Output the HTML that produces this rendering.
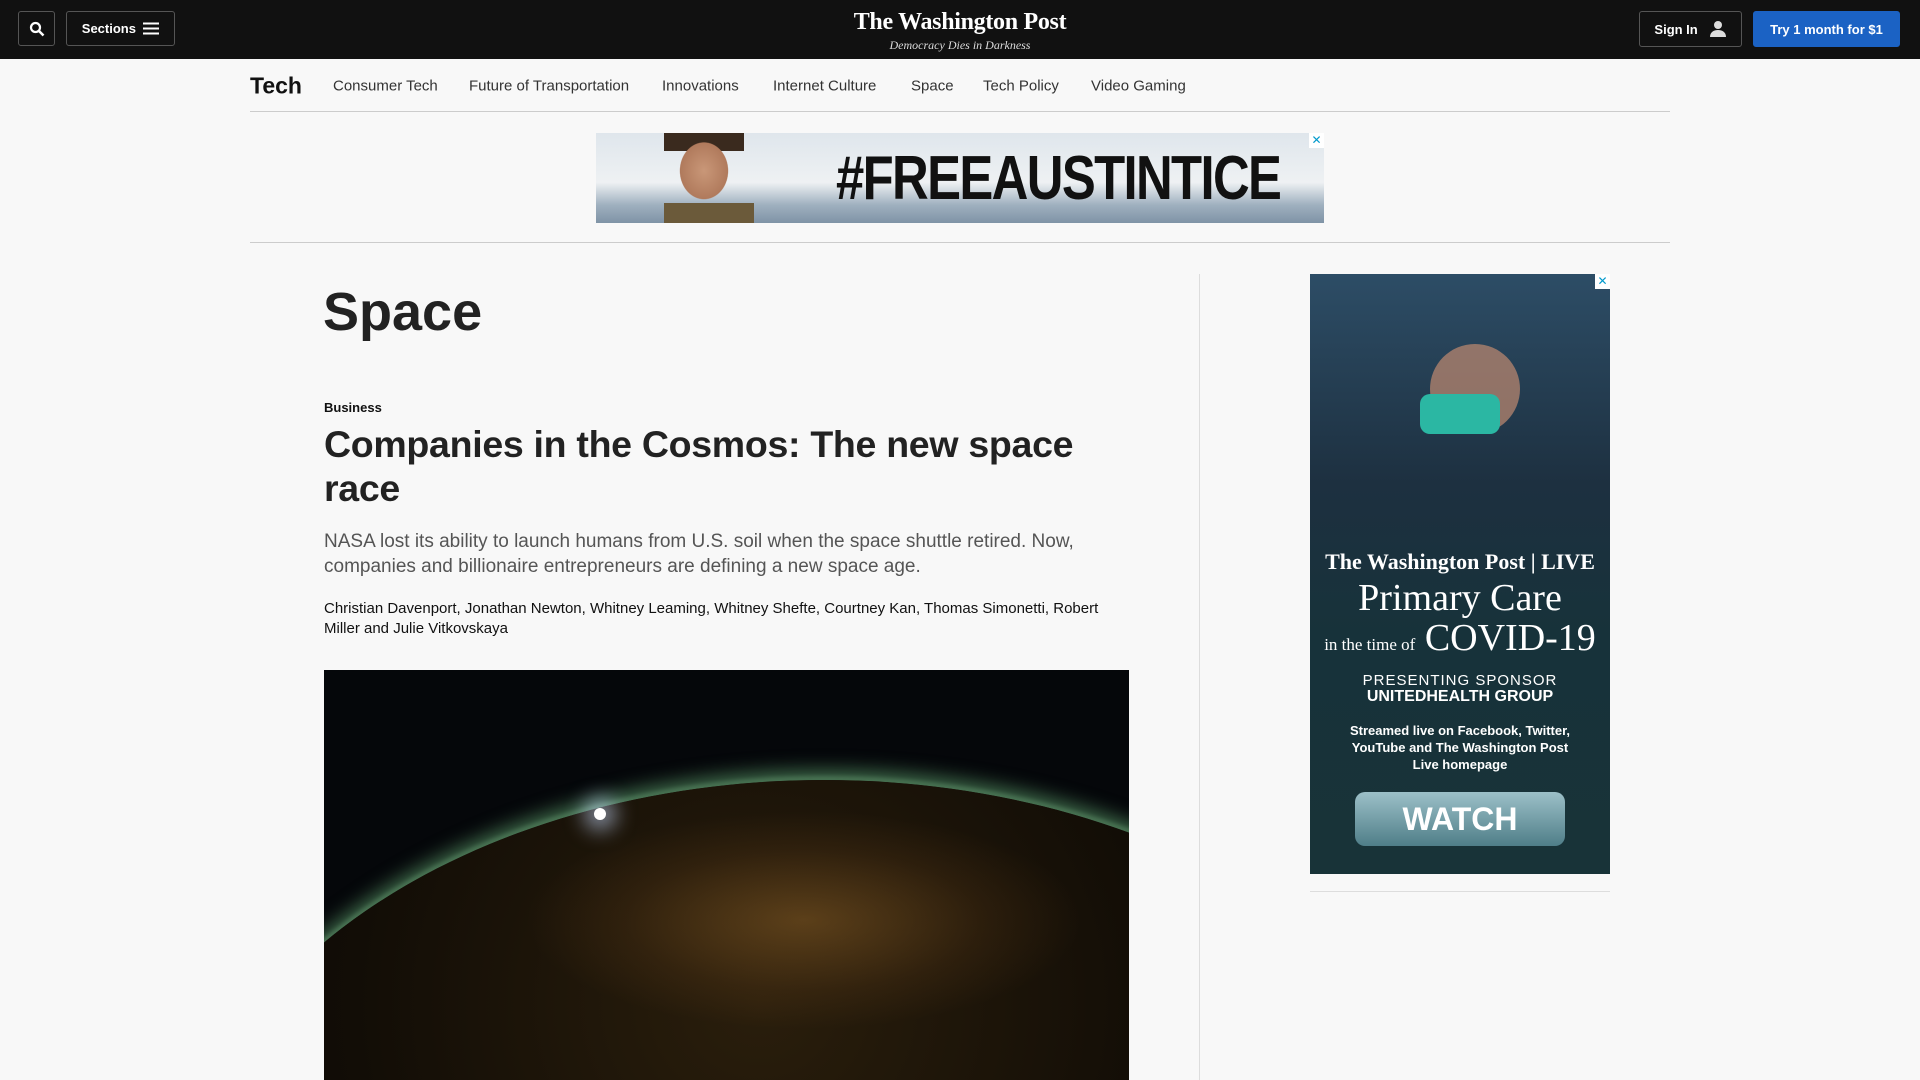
<!DOCTYPE html>
<html><head><meta charset="utf-8"><style>
*{margin:0;padding:0;box-sizing:border-box}
html,body{overflow:hidden}
body{width:1920px;height:1080px;background:#f8f8f8;font-family:"Liberation Sans",sans-serif;color:#111;position:relative}
.top{position:absolute;left:0;top:0;width:1920px;height:59px;background:#111}
.btn{position:absolute;border:1px solid #555;border-radius:3px;color:#fff;font-weight:bold;font-size:13px;display:flex;align-items:center;justify-content:center}
.logo{position:absolute;left:0;width:1920px;text-align:center;color:#fff;font-family:"Liberation Serif",serif}
.nav{position:absolute;top:86px;font-size:15px;color:#333;transform:translateY(-50%)}
.hr{position:absolute;height:1px;background:#ccc}
</style></head><body>
<div class="top">
 <div class="btn" style="left:18px;top:11px;width:37px;height:35px"><svg width="16" height="16" viewBox="0 0 16 16"><circle cx="6.5" cy="6.5" r="4.5" stroke="#fff" stroke-width="2.2" fill="none"/><path d="M10 10l4.5 4.5" stroke="#fff" stroke-width="2.5"/></svg></div>
 <div class="btn" style="left:66px;top:11px;width:109px;height:35px">Sections&nbsp;&nbsp;<svg width="16" height="13"><path d="M0 1.5h16M0 6.5h16M0 11.5h16" stroke="#fff" stroke-width="2"/></svg></div>
 <div class="logo" style="top:9px;font-size:24px;font-weight:bold;letter-spacing:-0.3px">The Washington Post</div>
 <div class="logo" style="top:38px;font-size:12px;font-style:italic;color:#ddd">Democracy Dies in Darkness</div>
 <div class="btn" style="left:1639px;top:11px;width:103px;height:36px">Sign In&nbsp;&nbsp;&nbsp;<svg width="18" height="18" viewBox="0 0 18 18"><circle cx="9" cy="5" r="4" fill="#ddd"/><path d="M1 17c0-5 4-7 8-7s8 2 8 7z" fill="#ddd"/></svg></div>
 <div class="btn" style="left:1753px;top:11px;width:147px;height:36px;background:#1b62c4;border-color:#1b62c4">Try 1 month for $1</div>
</div>
<div class="nav" style="left:250px;font-size:23px;font-weight:bold;color:#111">Tech</div>
<div class="nav" style="left:333px">Consumer Tech</div>
<div class="nav" style="left:469px">Future of Transportation</div>
<div class="nav" style="left:662px">Innovations</div>
<div class="nav" style="left:773px">Internet Culture</div>
<div class="nav" style="left:911px">Space</div>
<div class="nav" style="left:983px">Tech Policy</div>
<div class="nav" style="left:1091px">Video Gaming</div>
<div class="hr" style="left:250px;top:111px;width:1420px"></div>
<div style="position:absolute;left:596px;top:133px;width:728px;height:90px;background:linear-gradient(180deg,#dfe6ec 0%,#eef1f3 55%,#9fb0bf 80%,#7f93a6 100%);overflow:hidden">
 <div style="position:absolute;left:68px;top:0;width:80px;height:90px;background:radial-gradient(ellipse 34px 40px at 50% 42%,#c99778 0,#b07a5c 70%,transparent 72%),linear-gradient(#3a2a1e 0,#3a2a1e 20%,transparent 20%)"></div>
 <div style="position:absolute;left:68px;top:70px;width:90px;height:20px;background:#6b5a3a"></div>
 <div style="position:absolute;left:240px;top:10px;font-size:62px;font-weight:bold;letter-spacing:-2px;color:#111;transform:scaleX(0.82);transform-origin:left">#FREEAUSTINTICE</div>
 <div style="position:absolute;right:0;top:0;width:15px;height:15px;background:#fff;color:#09c;font-size:12px;text-align:center;line-height:15px">✕</div>
</div>
<div class="hr" style="left:250px;top:242px;width:1420px"></div>
<div style="position:absolute;left:1199px;top:274px;width:1px;height:806px;background:#ddd"></div>
<div style="position:absolute;left:323px;top:281px;font-size:54px;font-weight:bold;color:#222">Space</div>
<div style="position:absolute;left:324px;top:400px;font-size:13px;font-weight:bold">Business</div>
<div style="position:absolute;left:324px;top:422px;width:820px;font-size:37.5px;font-weight:bold;line-height:44px;color:#222;letter-spacing:-0.3px">Companies in the Cosmos: The new space race</div>
<div style="position:absolute;left:324px;top:529px;width:810px;font-size:19px;line-height:25px;color:#555">NASA lost its ability to launch humans from U.S. soil when the space shuttle retired. Now, companies and billionaire entrepreneurs are defining a new space age.</div>
<div style="position:absolute;left:324px;top:599px;width:810px;font-size:15px;line-height:20px;color:#111">Christian Davenport, Jonathan Newton, Whitney Leaming, Whitney Shefte, Courtney Kan, Thomas Simonetti, Robert Miller and Julie Vitkovskaya</div>
<div style="position:absolute;left:324px;top:670px;width:805px;height:410px;background:#05070a;overflow:hidden">
 <div style="position:absolute;left:-150px;top:110px;width:1300px;height:900px;border-radius:50%;background:radial-gradient(ellipse at 45% 25%,#2a1e0c 0,#120d06 40%,#060605 70%);box-shadow:0 -6px 18px 4px #3f6a4a,0 -2px 4px 1px #7aa080"></div>
 <div style="position:absolute;left:200px;top:140px;width:560px;height:220px;background:radial-gradient(ellipse,rgba(220,150,60,.3) 0,rgba(160,100,40,.12) 45%,transparent 70%)"></div>
 <div style="position:absolute;left:270px;top:138px;width:12px;height:12px;border-radius:50%;background:#fff;box-shadow:0 0 20px 10px rgba(200,220,255,.6)"></div>
</div>
<div style="position:absolute;left:1310px;top:274px;width:300px;height:600px;background:linear-gradient(180deg,#2d4d66 0,#1d3040 35%,#17323a 60%,#183338 100%);color:#fff;text-align:center;overflow:hidden">
 <div style="position:absolute;left:120px;top:70px;width:90px;height:90px;border-radius:50%;background:#c08a70;opacity:.7"></div>
 <div style="position:absolute;left:110px;top:120px;width:80px;height:40px;border-radius:10px;background:#2bb7a3"></div>
 <div style="position:absolute;right:0;top:0;width:15px;height:15px;background:#fff;color:#09c;font-size:12px;line-height:15px">✕</div>
 <div style="position:absolute;top:275px;width:300px;font-family:'Liberation Serif',serif;font-size:22px;font-weight:bold">The Washington Post | LIVE</div>
 <div style="position:absolute;top:302px;width:300px;font-family:'Liberation Serif',serif;font-size:38px">Primary Care</div>
 <div style="position:absolute;top:342px;width:300px;font-family:'Liberation Serif',serif;font-size:38px"><span style="font-size:17px">in the time of</span> COVID-19</div>
 <div style="position:absolute;top:398px;width:300px;font-size:15px;letter-spacing:1px">PRESENTING SPONSOR</div>
 <div style="position:absolute;top:414px;width:300px;font-size:16px;font-weight:bold">UNITEDHEALTH GROUP</div>
 <div style="position:absolute;top:448px;left:35px;width:230px;font-size:13px;font-weight:bold;line-height:17px">Streamed live on Facebook, Twitter, YouTube and The Washington Post Live homepage</div>
 <div style="position:absolute;top:518px;left:45px;width:210px;height:54px;border-radius:10px;background:linear-gradient(#9cc0c8,#4f7e88);font-size:32px;font-weight:bold;line-height:54px">WATCH</div>
</div>
<div class="hr" style="left:1310px;top:891px;width:300px;background:#ddd"></div>
</body></html>
